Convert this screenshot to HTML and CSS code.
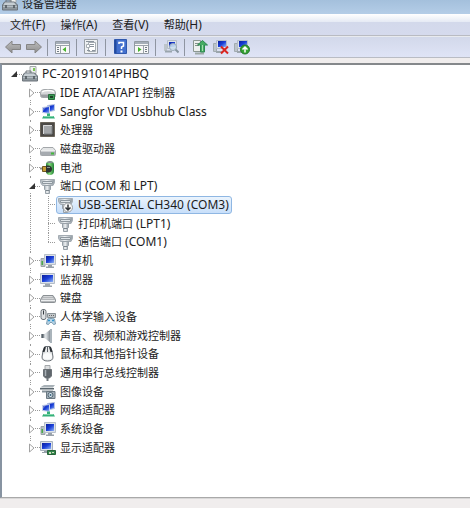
FILE: index.html
```html
<!DOCTYPE html>
<html lang="zh-CN">
<head>
<meta charset="utf-8">
<title>设备管理器</title>
<link rel="stylesheet" href="styles.css">
</head>
<body>
<svg class="defs" aria-hidden="true">
  <defs>
    <linearGradient id="scr" x1="0" y1="0" x2="1" y2="1"><stop offset="0" stop-color="#0a1e9c"/><stop offset=".5" stop-color="#1a3fd8"/><stop offset="1" stop-color="#8fb4f4"/></linearGradient>
    <linearGradient id="metal" x1="0" y1="0" x2="0" y2="1"><stop offset="0" stop-color="#f4f5f6"/><stop offset="1" stop-color="#8d9399"/></linearGradient>
    <linearGradient id="side" x1="0" y1="0" x2="1" y2="0"><stop offset="0" stop-color="#7d868e"/><stop offset=".45" stop-color="#e4e8eb"/><stop offset="1" stop-color="#6f7880"/></linearGradient>
    <linearGradient id="plug" x1="0" y1="0" x2="1" y2="0"><stop offset="0" stop-color="#a9b2b9"/><stop offset=".45" stop-color="#eef1f3"/><stop offset="1" stop-color="#8f99a1"/></linearGradient>
    <linearGradient id="cell" x1="0" y1="0" x2="1" y2="0"><stop offset="0" stop-color="#1f7a30"/><stop offset=".4" stop-color="#8be07f"/><stop offset="1" stop-color="#218035"/></linearGradient>
    <linearGradient id="arrow" x1="0" y1="0" x2="0" y2="1"><stop offset="0" stop-color="#bdbdbd"/><stop offset="1" stop-color="#8e8e8e"/></linearGradient>
  </defs>
  <symbol id="pc" viewBox="0 0 16 16"><path d="M8 .5h6v7H8z" fill="#eef0ee" stroke="#a3a8aa"/><path d="M11 2h2v3h-2z" fill="#7cc653"/><path d="M4 7V5h5v2" fill="none" stroke="#6f777d"/><path d="M.5 10L2.500 7h10l3 3v5H.5z" fill="#8f989e" stroke="#6b737a"/><path d="M3 7.500h9L14 10H1.500z" fill="#c6ced3"/><path d="M1 11.500h14" stroke="#b4bdc3"/><path d="M4 10v3M12 10v3" stroke="#4b5359" stroke-width="1.500"/></symbol>
  <symbol id="ide" viewBox="0 0 16 16"><path d="M.5 8Q.5 4.500 4 4.500h8q3.500 0 3.500 3.500v2.500q0 2-2 2h-11q-2 0-2-2z" fill="#d4d6d8" stroke="#a4a8ab"/><path d="M1 9.500h14v1q0 2-2 2H3q-2 0-2-2z" fill="#9b9fa3"/><path d="M2 7Q4 5.500 8 5.500t6 1.500" stroke="#fff" stroke-width="1.500" fill="none"/><path d="M8.500 9.500h6v5h-6z" fill="#3b9b55" stroke="#2a6e3e"/><path d="M10 11h3v2h-3z" fill="#1d4127"/></symbol>
  <symbol id="net" viewBox="0 0 16 16"><path d="M7.500 1.500l7-1v6l-7 1.500z" fill="url(#scr)" stroke="#b9c6e4" stroke-linejoin="round"/><path d="M2.500 3.500l7-1v7l-7-1z" fill="url(#scr)" stroke="#c8d3ea" stroke-linejoin="round"/><path d="M3 4l3-.5L3 7z" fill="#fff" opacity=".35"/><path d="M7 9.500h3V12h3.500l1.500 2.500H2L3.500 12H7z" fill="#35b07a"/><path d="M4 12.500h9" stroke="#7fd6a8"/></symbol>
  <symbol id="cpu" viewBox="0 0 16 16"><path d="M.5.500h14v14H.5z" fill="#4c4a47" stroke="#6a655b"/><path d="M3 3h9v9H3z" fill="#a4a7aa"/><path d="M3.500 12V3.500H12" fill="none" stroke="#d9dadb"/><path d="M12 4v8H4" fill="none" stroke="#7d8083"/></symbol>
  <symbol id="disk" viewBox="0 0 16 16"><path d="M.5 9.500L3 6.500h10l2.500 3v4q0 1-1 1h-13q-1 0-1-1z" fill="#e3e5e6" stroke="#a3a7aa"/><path d="M1 10h14v4H1z" fill="#a6abb0"/><path d="M1 10h14" stroke="#f5f6f6"/><path d="M11 11.500h3v2h-3z" fill="#42b83c"/></symbol>
  <symbol id="battery" viewBox="0 0 16 16"><rect x="6" y="1" width="8" height="14" rx="4" fill="url(#cell)"/><path d="M7.500 2.500Q10 0 12.500 2.500z" fill="#d6dadb" stroke="#879094"/><path d="M0 8.500h3" stroke="#8a8a84" stroke-width="2"/><path d="M2.500 6.500h4v5h-4z" fill="#c79d34" stroke="#6e5922"/><path d="M6 5.500h3q3 1 3 3.500t-3 3.500H6z" fill="#2d3430"/><path d="M7 7.500h3" stroke="#8b948e"/></symbol>
  <symbol id="port" viewBox="0 0 16 16"><path d="M.5 1.500h14v3L13 7.500H2.500L.5 4.500z" fill="url(#plug)" stroke="#a4acb3"/><path d="M2.500 3.500h10v2h-10z" fill="#dfe5e9" stroke="#8f989f"/><path d="M4.500 7.500h6v4l-1 1v3h-4v-3l-1-1z" fill="url(#plug)" stroke="#98a1a8"/><path d="M5.500 12.500h4" stroke="#7c868e"/></symbol>
  <symbol id="portdown" viewBox="0 0 16 16"><use href="#port"/><circle cx="10" cy="10.500" r="4.500" fill="#f7f7f7" stroke="#9ba0a4"/><path d="M10 7.500v5M7.500 10.500L10 13l2.500-2.500" fill="none" stroke="#303539" stroke-width="1.500"/></symbol>
  <symbol id="computer" viewBox="0 0 16 16"><path d="M1 5.500h4v8H1z" fill="#b5bec1" stroke="#9aa3a8"/><path d="M1.500 8h1.500v4H1.500z" fill="#49aa4b"/><path d="M4.500 1.500h11v10h-11z" fill="#dce2e8" stroke="#b9c1ca"/><path d="M6 3h8v7H6z" fill="url(#scr)"/><path d="M8 12h4v1.500h2v1.500H6v-1.500h2z" fill="#98a1aa"/></symbol>
  <symbol id="monitor" viewBox="0 0 16 16"><path d="M.5 1.500h14v10H.5z" fill="#dce2ea" stroke="#b4bdc6"/><path d="M2 3h11v7H2z" fill="url(#scr)"/><path d="M5 12h5v1.500h2v1.500H3v-1.500h2z" fill="#9da6ae"/></symbol>
  <symbol id="keyboard" viewBox="0 0 16 16"><path d="M.5 9.500L3 5.500h10l2.500 4v2q0 1-1 1h-13q-1 0-1-1z" fill="#b4b7ba" stroke="#8b9094"/><path d="M3.500 6.500h9M2.500 8.500h11" stroke="#d4d6d8"/><path d="M1 10.500h14" stroke="#eceeef"/></symbol>
  <symbol id="hid" viewBox="0 0 16 16"><rect x="1" y=".5" width="5" height="10" rx="2" fill="#dfe1e3" stroke="#6a7177"/><path d="M3.500 1.500v4" stroke="#343a40"/><path d="M7.500 4.500h8v4h-8z" fill="#c3c8cb" stroke="#8b9398"/><path d="M9 6.500h6" stroke="#666" stroke-dasharray="1 1"/><path d="M6.500 15l1-5 2-.5h3l2 .5 1 5-2 .5-1.500-2h-2l-1.500 2z" fill="#b9d6e8" stroke="#7e9cb0"/><path d="M8 11.500h2M12 11.500h2" stroke="#2d94ce" stroke-width="1.500"/></symbol>
  <symbol id="sound" viewBox="0 0 16 16"><path d="M1.500 6h3l6.500-5v14l-6.500-5h-3z" fill="url(#side)"/><path d="M11 1v14" stroke="#aab4bb" stroke-width="2"/><path d="M2.500 6v4" stroke="#59636a" stroke-width="2"/></symbol>
  <symbol id="mouse" viewBox="0 0 16 16"><path d="M5 .5Q2.500 4 2 11q0 4 5.500 4t5.500-4Q12.500 4 10 .5z" fill="#e9ebec" stroke="#6b7177"/><path d="M5 1L3.500 6M10 1l1.500 5" stroke="#2b3035" stroke-width="2"/><path d="M7.500 1v5" stroke="#5a6065"/><path d="M3 9q4.500-4 9 0v3q-4.500 3-9 0z" fill="#fafbfb"/></symbol>
  <symbol id="usb" viewBox="0 0 16 16"><path d="M5 .5h5v4H5z" fill="#dcdedf" stroke="#a3a7aa"/><path d="M3.500 4.500h8v6.500L9.500 13h-4l-2-2z" fill="#5f666c" stroke="#6b7176"/><path d="M5.500 5v6" stroke="#a9b0b5" stroke-width="1.500"/><path d="M7.500 13v3" stroke="#70777c" stroke-width="2"/></symbol>
  <symbol id="imaging" viewBox="0 0 16 16"><path d="M0 3.500L4 1h11l-2 2.500z" fill="#a8b1b7"/><path d="M0 4h14v1.500H0z" fill="#5b676f"/><path d="M2 6.500h11v2H2z" fill="#86929a"/><path d="M6.500 7.500h8.500v7H6.500z" fill="#a3b0b9" stroke="#6b7982"/><circle cx="10.500" cy="11" r="2.500" fill="#dce8ef" stroke="#4f6371"/><circle cx="10.500" cy="11" r="1" fill="#3a657f"/></symbol>
  <symbol id="display" viewBox="0 0 16 16"><path d="M.5 1.500h12v9H.5z" fill="#dce2ea" stroke="#a8b2bd"/><path d="M2 3h9v6H2z" fill="url(#scr)"/><path d="M4 11h5v2H2v-1h2z" fill="#98a1aa"/><path d="M7.500 10.500h8v4h-8z" fill="#33884c" stroke="#286139"/><path d="M9 12h2v2H9zM12 12h2v1h-2z" fill="#d2d8be"/></symbol>

  <symbol id="back" viewBox="0 0 16 16"><path d="M.5 8L7 2v3.500h8.500v5H7V14z" fill="url(#arrow)" stroke="#858585" stroke-linejoin="round"/></symbol>
  <symbol id="forward" viewBox="0 0 16 16"><path d="M15.500 8L9 2v3.500H.5v5H9V14z" fill="url(#arrow)" stroke="#858585" stroke-linejoin="round"/></symbol>
  <symbol id="tree" viewBox="0 0 16 16"><path d="M.5 2.500h14v12H.5z" fill="#f8f8f8" stroke="#929aa3"/><path d="M1 3h13v2H1z" fill="#a5aeb8"/><path d="M1 6.500h13M5.500 7v7" stroke="#9ba3ab"/><path d="M2 8.500h2M2 10.500h2M2 12.500h2" stroke="#717b85"/><path d="M11 8v5l-3.500-2.500z" fill="#46b52d"/></symbol>
  <symbol id="props" viewBox="0 0 16 16"><path d="M.5.5h13v14H.5z" fill="#eef0f2" stroke="#999fa6"/><path d="M4.500 3.500h7v9h-7z" fill="#fff" stroke="#a6adb3"/><path d="M2 2.500h8M6 5.500h4M6 7.500h4M3 11.500h3M8 11.500h3" stroke="#8b949d"/><path d="M2.500 5.500h3v3h-3z" fill="#fff" stroke="#a6adb3"/></symbol>
  <symbol id="help" viewBox="0 0 16 16"><path d="M1.500.5h12v14h-12z" fill="#4370cf" stroke="#3058ad"/><path d="M2.500 1v13" stroke="#234a9f" stroke-width="2"/><path d="M6 5V3.500h4.500V7L8.500 8v2" stroke="#fff" stroke-width="1.500" fill="none"/><path d="M7.500 11.500h2v2h-2z" fill="#fff"/></symbol>
  <symbol id="pane" viewBox="0 0 16 16"><path d="M.5 2.500h14v12H.5z" fill="#f8f8f8" stroke="#929aa3"/><path d="M1 3h13v2H1z" fill="#a5aeb8"/><path d="M1 6.500h13M9.500 7v7" stroke="#9ba3ab"/><path d="M11 8.500h2M11 10.500h2M11 12.500h2" stroke="#717b85"/><path d="M4 8v5l3.500-2.500z" fill="#46b52d"/></symbol>
  <symbol id="scan" viewBox="0 0 16 16"><path d="M1 5h3v7H1z" fill="#bdc5ca"/><path d="M4.500 1.500h9v8h-9z" fill="#dce2ea" stroke="#b4bdc8"/><path d="M6 3h6v5H6z" fill="url(#scr)"/><path d="M2 12.500h7" stroke="#9aa5ad" stroke-width="2"/><circle cx="10" cy="8" r="3.500" fill="#cce0ef" fill-opacity=".85" stroke="#98a9b6"/><path d="M12.500 10.500l3 3" stroke="#8795a0" stroke-width="2"/></symbol>
  <symbol id="update" viewBox="0 0 16 16"><path d="M1.500 1.500h7v11h-7z" fill="#edf0ee" stroke="#8b9792"/><path d="M3 4.500h4M3 6.500h4" stroke="#84918a"/><path d="M3 14.500h9" stroke="#9da8a5" stroke-width="2"/><path d="M8.500 13V6H5.500l5-4.500 5 4.500h-3v7z" fill="#46ab62" stroke="#2f8850"/><path d="M10.500 6v6" stroke="#a5e0ae"/></symbol>
  <symbol id="small" viewBox="0 0 16 16"><path d="M.5 4.500h3v8h-3z" fill="#bdc5ca" stroke="#a2abb0"/><path d="M3.500 1.500h10v8h-10z" fill="#dce2ea" stroke="#b4bdc8"/><path d="M5 2h8v6H5z" fill="url(#scr)"/><path d="M3 12h7v2H3z" fill="#9ca6ad"/></symbol>
  <symbol id="remove" viewBox="0 0 16 16"><use href="#small"/><path d="M8 7.500l7 7M15 7.500l-7 7" stroke="#d92520" stroke-width="2"/></symbol>
  <symbol id="enable" viewBox="0 0 16 16"><use href="#small"/><circle cx="11" cy="10.500" r="4.500" fill="#35a332" stroke="#207627"/><path d="M11 13.500v-5M8.500 10.500L11 8l2.500 2.500" stroke="#fff" stroke-width="1.500" fill="none"/></symbol>
  <symbol id="closed" viewBox="0 0 6 10"><path d="M.5 1v8L5 5z" fill="#fff" stroke="#a2a2a2"/></symbol>
  <symbol id="open" viewBox="0 0 6 10"><path d="M6 2v6H0z" fill="#333"/></symbol>
</svg>

<div class="window">
  <header class="titlebar"><svg class="icon"><use href="#pc"/></svg><h1>设备管理器</h1></header>
  <nav class="menubar" aria-label="菜单">
    <button>文件<span>(F)</span></button><button>操作<span>(A)</span></button><button>查看<span>(V)</span></button><button>帮助<span>(H)</span></button>
  </nav>
  <div class="toolbar" role="toolbar">
    <button aria-label="后退"><svg class="icon"><use href="#back"/></svg></button>
    <button aria-label="前进"><svg class="icon"><use href="#forward"/></svg></button>
    <i class="sep"></i>
    <button aria-label="显示控制台树"><svg class="icon"><use href="#tree"/></svg></button>
    <i class="sep"></i>
    <button aria-label="属性"><svg class="icon"><use href="#props"/></svg></button>
    <i class="sep"></i>
    <button aria-label="帮助"><svg class="icon"><use href="#help"/></svg></button>
    <button aria-label="显示操作窗格"><svg class="icon"><use href="#pane"/></svg></button>
    <i class="sep"></i>
    <button aria-label="扫描"><svg class="icon"><use href="#scan"/></svg></button>
    <i class="sep"></i>
    <button aria-label="更新驱动程序"><svg class="icon"><use href="#update"/></svg></button>
    <button aria-label="卸载"><svg class="icon"><use href="#remove"/></svg></button>
    <button aria-label="启用"><svg class="icon"><use href="#enable"/></svg></button>
  </div>
  <main class="panel">
    <ul class="tree" role="tree">
      <li class="root" role="treeitem" aria-level="1" aria-expanded="true"><button class="toggle" aria-label="折叠"><svg><use href="#open"/></svg></button><i class="dots"></i><svg class="icon"><use href="#pc"/></svg><span class="label"><span>PC-20191014PHBQ</span></span></li>
      <li class="group" role="treeitem" aria-level="2"><button class="toggle" aria-label="展开"><svg><use href="#closed"/></svg></button><i class="dots"></i><svg class="icon"><use href="#ide"/></svg><span class="label"><span>IDE ATA/ATAPI </span>控制器</span></li>
      <li class="group" role="treeitem" aria-level="2"><button class="toggle" aria-label="展开"><svg><use href="#closed"/></svg></button><i class="dots"></i><svg class="icon"><use href="#net"/></svg><span class="label"><span>Sangfor VDI Usbhub Class</span></span></li>
      <li class="group" role="treeitem" aria-level="2"><button class="toggle" aria-label="展开"><svg><use href="#closed"/></svg></button><i class="dots"></i><svg class="icon"><use href="#cpu"/></svg><span class="label">处理器</span></li>
      <li class="group" role="treeitem" aria-level="2"><button class="toggle" aria-label="展开"><svg><use href="#closed"/></svg></button><i class="dots"></i><svg class="icon"><use href="#disk"/></svg><span class="label">磁盘驱动器</span></li>
      <li class="group" role="treeitem" aria-level="2"><button class="toggle" aria-label="展开"><svg><use href="#closed"/></svg></button><i class="dots"></i><svg class="icon"><use href="#battery"/></svg><span class="label">电池</span></li>
      <li class="group" role="treeitem" aria-level="2" aria-expanded="true"><button class="toggle" aria-label="折叠"><svg><use href="#open"/></svg></button><i class="dots"></i><svg class="icon"><use href="#port"/></svg><span class="label">端口<span> (COM </span>和<span> LPT)</span></span></li>
      <li class="device" role="treeitem" aria-level="3" aria-selected="true"><i class="dots"></i><span class="item selected"><svg class="icon"><use href="#portdown"/></svg><span class="label"><span>USB-SERIAL CH340 (COM3)</span></span></span></li>
      <li class="device" role="treeitem" aria-level="3"><i class="dots"></i><span class="item"><svg class="icon"><use href="#port"/></svg><span class="label">打印机端口<span> (LPT1)</span></span></span></li>
      <li class="device last" role="treeitem" aria-level="3"><i class="dots"></i><span class="item"><svg class="icon"><use href="#port"/></svg><span class="label">通信端口<span> (COM1)</span></span></span></li>
      <li class="group" role="treeitem" aria-level="2"><button class="toggle" aria-label="展开"><svg><use href="#closed"/></svg></button><i class="dots"></i><svg class="icon"><use href="#computer"/></svg><span class="label">计算机</span></li>
      <li class="group" role="treeitem" aria-level="2"><button class="toggle" aria-label="展开"><svg><use href="#closed"/></svg></button><i class="dots"></i><svg class="icon"><use href="#monitor"/></svg><span class="label">监视器</span></li>
      <li class="group" role="treeitem" aria-level="2"><button class="toggle" aria-label="展开"><svg><use href="#closed"/></svg></button><i class="dots"></i><svg class="icon"><use href="#keyboard"/></svg><span class="label">键盘</span></li>
      <li class="group" role="treeitem" aria-level="2"><button class="toggle" aria-label="展开"><svg><use href="#closed"/></svg></button><i class="dots"></i><svg class="icon"><use href="#hid"/></svg><span class="label">人体学输入设备</span></li>
      <li class="group" role="treeitem" aria-level="2"><button class="toggle" aria-label="展开"><svg><use href="#closed"/></svg></button><i class="dots"></i><svg class="icon"><use href="#sound"/></svg><span class="label">声音、视频和游戏控制器</span></li>
      <li class="group" role="treeitem" aria-level="2"><button class="toggle" aria-label="展开"><svg><use href="#closed"/></svg></button><i class="dots"></i><svg class="icon"><use href="#mouse"/></svg><span class="label">鼠标和其他指针设备</span></li>
      <li class="group" role="treeitem" aria-level="2"><button class="toggle" aria-label="展开"><svg><use href="#closed"/></svg></button><i class="dots"></i><svg class="icon"><use href="#usb"/></svg><span class="label">通用串行总线控制器</span></li>
      <li class="group" role="treeitem" aria-level="2"><button class="toggle" aria-label="展开"><svg><use href="#closed"/></svg></button><i class="dots"></i><svg class="icon"><use href="#imaging"/></svg><span class="label">图像设备</span></li>
      <li class="group" role="treeitem" aria-level="2"><button class="toggle" aria-label="展开"><svg><use href="#closed"/></svg></button><i class="dots"></i><svg class="icon"><use href="#net"/></svg><span class="label">网络适配器</span></li>
      <li class="group" role="treeitem" aria-level="2"><button class="toggle" aria-label="展开"><svg><use href="#closed"/></svg></button><i class="dots"></i><svg class="icon"><use href="#computer"/></svg><span class="label">系统设备</span></li>
      <li class="group last" role="treeitem" aria-level="2"><button class="toggle" aria-label="展开"><svg><use href="#closed"/></svg></button><i class="dots"></i><svg class="icon"><use href="#display"/></svg><span class="label">显示适配器</span></li>
    </ul>
  </main>
  <footer class="statusbar"></footer>
</div>
</body>
</html>
```
FILE: styles.css
```css
* { box-sizing: border-box; }

body {
  margin: 0;
  background: #f0eded;
  color: #1c1c1c;
  font: 11px/16px "Noto Sans", "Noto Sans CJK SC", sans-serif;
}

button {
  margin: 0;
  padding: 0;
  border: 0;
  background: none;
  color: inherit;
  font: inherit;
}

.defs { position: absolute; width: 0; height: 0; }
.icon { display: block; flex: none; width: 16px; height: 16px; }

.window { display: flex; flex-direction: column; min-height: 100vh; }

.titlebar {
  display: flex;
  align-items: flex-end;
  gap: 4px;
  height: 14px;
  padding: 0 2px 3px;
  overflow: hidden;
  background: linear-gradient(#a4c0dc, #b4cde7);
}
.titlebar h1 { margin: 0; font: inherit; line-height: 14px; }

.menubar {
  display: flex;
  gap: 15px;
  height: 22px;
  padding: 0 10px;
  border-bottom: 1px solid #b9bbc2;
  background: linear-gradient(#fff, #e5eaf4 8px, #d3d9eb 8px, #d5daed);
}
.menubar span, .label span { font-size: 12px; white-space: pre; }

.toolbar {
  display: flex;
  align-items: center;
  gap: 5px;
  height: 22px;
  padding: 0 5px;
  border-top: 1px solid #e8eaee;
  border-bottom: 1px solid #b9bcc4;
  background: linear-gradient(#d2d8ea, #dfe4f6);
}
.sep { width: 1px; height: 17px; margin-right: 2px; background: #8f95a1; }

.panel {
  flex: 1;
  margin-top: 5px;
  border-top: 2px solid #85888b;
  border-bottom: 1px solid #a9a9a9;
  border-left: 2px solid #8793a1;
  background: #fff;
}

/* Rows share the height of the list evenly. */
.tree {
  display: grid;
  grid-auto-rows: 1fr;
  min-height: 392px;
  margin: 0;
  padding: 0;
  list-style: none;
}
.tree li { display: flex; align-items: center; min-height: 0; white-space: nowrap; }

.root { padding-left: 9px; }
.group { padding-left: 27px; }
.device { padding-left: 46px; }

.group, .device {
  background: repeating-linear-gradient(#999 0 1px, transparent 1px 2px) 28px 0 / 1px 100% no-repeat;
}
.group.last { background-size: 1px 50%; }
.device {
  background:
    repeating-linear-gradient(#999 0 1px, transparent 1px 2px) 28px 0 / 1px 100% no-repeat,
    repeating-linear-gradient(#999 0 1px, transparent 1px 2px) 46px 0 / 1px 100% no-repeat;
}
.device.last { background-size: 1px 100%, 1px 50%; }

.toggle { flex: none; width: 6px; height: 14px; background: #fff; }
.toggle svg { display: block; width: 6px; height: 10px; }

.dots {
  flex: none;
  width: 5px;
  height: 1px;
  background: repeating-linear-gradient(90deg, #999 0 1px, transparent 1px 2px);
}
.device .dots { width: 8px; }

.label { margin-left: 4px; }
.item { display: flex; align-items: center; height: 18px; padding: 0 2px 0 1px; border: 1px solid transparent; border-radius: 3px; }
.selected { border-color: #8fb7e3; background: linear-gradient(#ebf4fd, #c8dffa); }

.statusbar { height: 10px; border-top: 1px solid #d9d8d8; }
```
